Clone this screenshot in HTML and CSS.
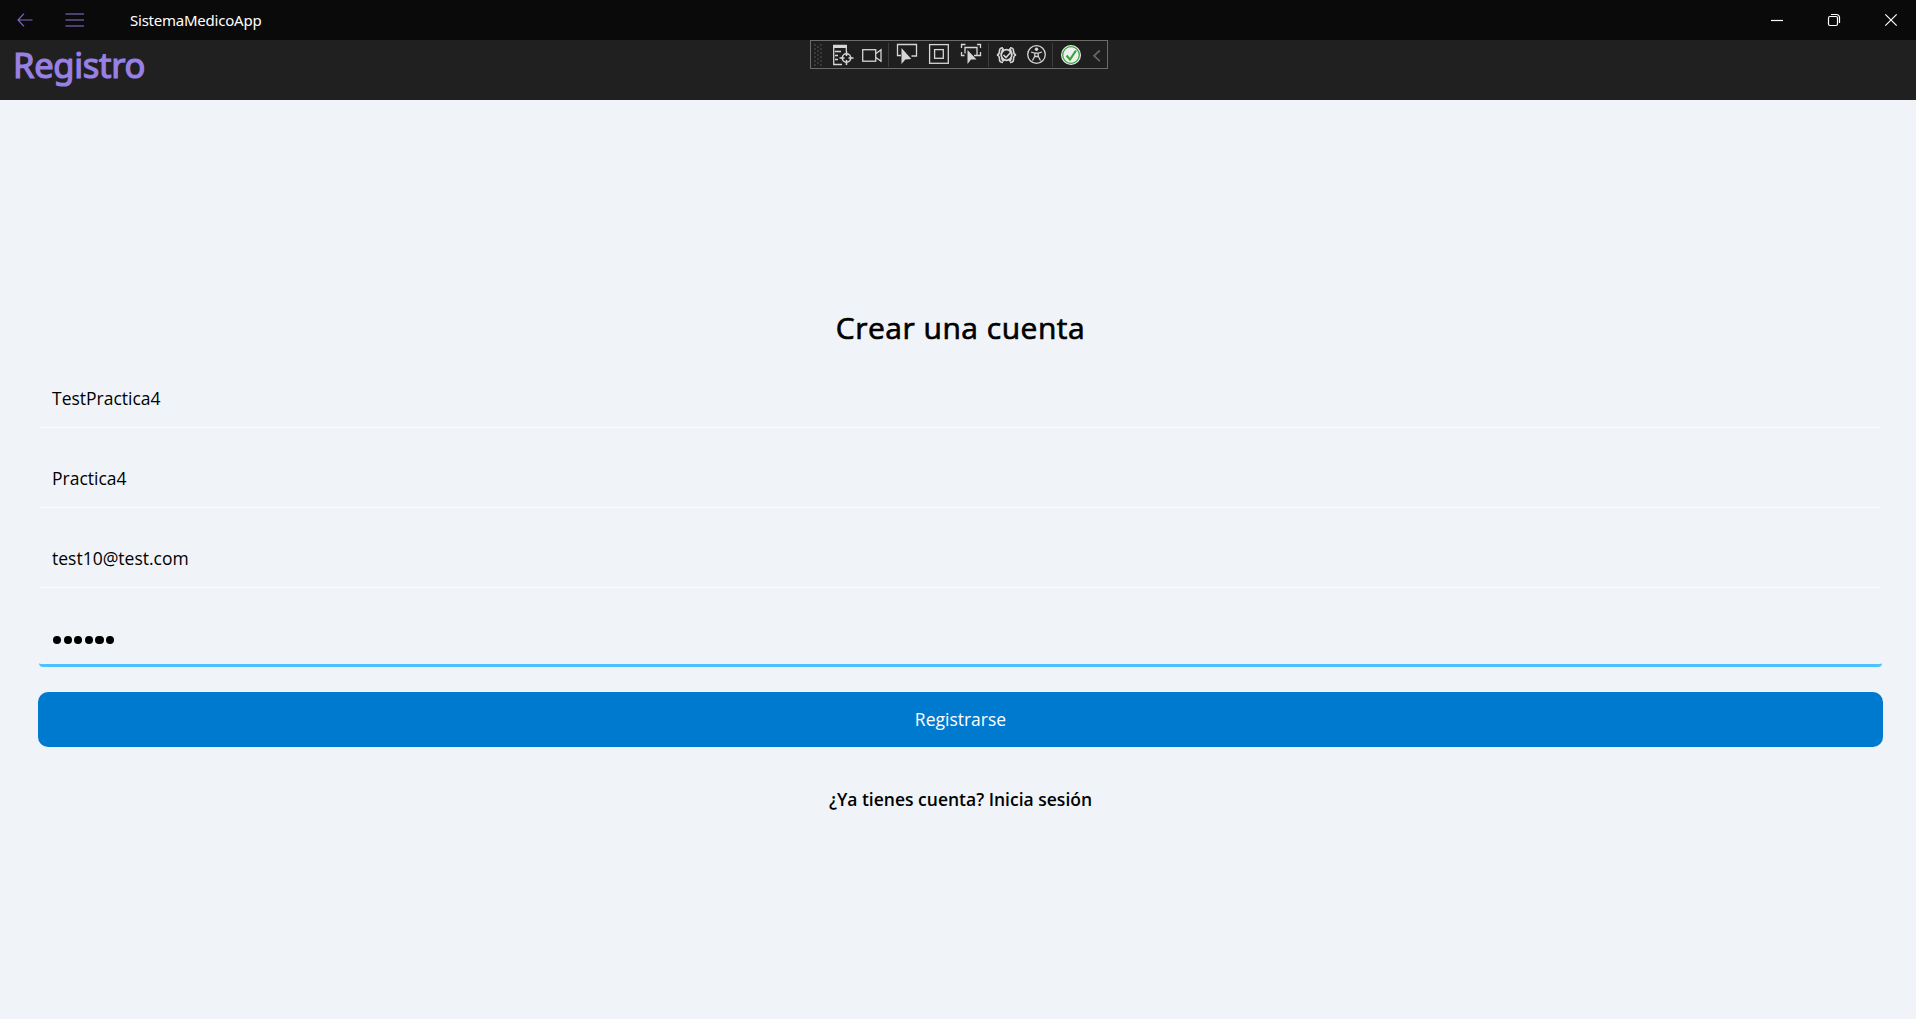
FILE: index.html
```html
<!DOCTYPE html>
<html lang="es">
<head>
<meta charset="utf-8">
<title>SistemaMedicoApp</title>
<link rel="stylesheet" href="styles.css">
</head>
<body>
<header class="titlebar">
  <button class="nav-btn back" aria-label="Atrás"><svg width="16" height="14" viewBox="0 0 16 14"><path d="M7 .7 1 7l6 6.3M1 7h14.5"/></svg></button>
  <button class="nav-btn menu" aria-label="Menú"><svg width="20" height="14" viewBox="0 0 20 14"><path d="M.5 1h18.5M.5 7h18.5M.5 13h18.5"/></svg></button>
  <span class="app-name">SistemaMedicoApp</span>
  <div class="window-controls">
    <button aria-label="Minimizar"><svg width="14" height="14" viewBox="0 0 14 14"><path d="M1 7.5h12"/></svg></button>
    <button aria-label="Restaurar"><svg width="14" height="14" viewBox="0 0 14 14"><rect x="1.5" y="3.5" width="9" height="9" rx="1.5"/><path d="M4 1.5h5.5a3 3 0 0 1 3 3V10"/></svg></button>
    <button aria-label="Cerrar"><svg width="14" height="14" viewBox="0 0 14 14"><path d="m1.3 1.3 11.4 11.4M12.700 1.300 1.300 12.700"/></svg></button>
  </div>
</header>
<div class="page-header">
  <h1 class="page-title">Registro</h1>
  <div class="debug-bar">
    <svg class="grip" width="16" height="27" viewBox="811 41 16 27"><path d="M815 44v22M821 44v22" stroke-dasharray="2 2"/><path d="M818 46v20" stroke-dasharray="2 2"/></svg>
    <svg width="30" height="27" viewBox="827 41 30 27"><path d="M842 64.500H833.700V45.500H846.300V51"/><path d="M833 46.500h14" stroke-width="3"/><path d="M835 51.500h6M835 55.500h3M835 59.500h3"/><circle cx="846.500" cy="58" r="4.200" stroke-width="1.500"/><path d="M846.500 51v5M846.500 60v5M839.500 58h5M848.500 58h5" stroke-width="1.500"/></svg>
    <svg width="31" height="27" viewBox="857 41 31 27"><rect x="862.700" y="49.700" width="13" height="11.500"/><path d="m876 53.500 5-3.700v11.400l-5-3.700"/></svg>
    <i class="sep"></i>
    <svg width="34" height="27" viewBox="889 41 34 27"><path d="M901 55.500h-3.500v-11h19v11.500h-5"/><path class="solid" d="M901.500 48v16l3.800-4.500 6-.5z"/></svg>
    <svg width="32" height="27" viewBox="923 41 32 27"><rect x="929.600" y="44.600" width="18.700" height="18.700"/><rect x="934.600" y="49.600" width="8.700" height="8.700"/></svg>
    <svg width="33" height="27" viewBox="955 41 33 27"><path d="M961.500 48v-3.500h4M977 44.500h3.500V48M961.500 52v3.500h3M980.500 52v3.500h-3M968 47.500h9v8h-3M968 47.500h-3v6"/><path class="solid" d="M967.500 50v14l3.500-4.500h5.500z"/></svg>
    <i class="sep"></i>
    <svg width="32" height="27" viewBox="989 41 32 27"><circle cx="1006.500" cy="55" r="5.300" stroke-width="1.800"/><path d="m1003.500 55 2.500 2.500 5-5.500" stroke-width="1.600"/><path d="M1003 47.700c-3 0-3.500 1-3.500 3 0 3-1 4-2.500 4.300 1.500.3 2.500 1.500 2.500 4.500 0 2 .500 3 3.500 3M1010 47.700c3 0 3.500 1 3.500 3 0 3 1 4 2.500 4.300-1.500.3-2.500 1.500-2.500 4.500 0 2-.500 3-3.500 3M1004 49c-1.800 0-2 1-2 3M1009 49c1.800 0 2 1 2 3M1004 61c-1.800 0-2-1-2-3M1009 61c1.800 0 2-1 2-3" stroke-width="1.600"/></svg>
    <svg width="31" height="27" viewBox="1021 41 31 27"><circle cx="1036.500" cy="54.500" r="8.800"/><circle class="solid" cx="1036.500" cy="49.200" r="1.700"/><path d="m1031 52 3.800 1.200v3l-2.300 4.300M1042 52l-3.800 1.200v3l2.300 4.300M1034.800 53.200h3.400M1034.800 56.500h3.400"/></svg>
    <i class="sep"></i>
    <svg width="34" height="27" viewBox="1053 41 34 27"><circle class="ok-rim" cx="1071" cy="55" r="10"/><circle class="ok-disc" cx="1071" cy="55" r="8.300"/><path class="ok-check" d="m1066.500 55.500 3.500 4 6-9"/></svg>
    <svg width="20" height="27" viewBox="1087 41 20 27"><path class="chevron" d="m1099.800 50.500-5.800 5.300 5.800 5.300"/></svg>
  </div>
</div>
<main class="content">
  <form class="form">
    <h2 class="heading">Crear una cuenta</h2>
    <div class="field"><span class="value">TestPractica4</span></div>
    <div class="field"><span class="value">Practica4</span></div>
    <div class="field"><span class="value">test10@test.com</span></div>
    <div class="field focused"><span class="dots"><i></i><i></i><i></i><i></i><i></i><i></i></span></div>
    <button class="submit" type="button">Registrarse</button>
    <a class="login-link">¿Ya tienes cuenta? Inicia sesión</a>
  </form>
</main>
</body>
</html>
```
FILE: styles.css
```css
* { box-sizing: border-box; }

body {
  margin: 0;
  height: 1019px;
  display: flex;
  flex-direction: column;
  overflow: hidden;
  background: #f0f4f8;
  color: #000;
  font-family: "Open Sans", "Noto Sans", sans-serif;
}

button {
  padding: 0;
  border: 0;
  background: none;
  font: inherit;
}

svg { display: block; fill: none; }

.titlebar {
  flex: none;
  height: 40px;
  display: flex;
  align-items: center;
  background: #0a0a0a;
  color: #fff;
}

.nav-btn {
  height: 40px;
  width: 50px;
  display: grid;
  place-items: center;
}

.nav-btn svg { stroke: #7f68c4; stroke-width: 1.2; }
.menu svg { stroke: #8d74d8; stroke-width: 1.2; }

.app-name {
  margin-left: 30px;
  font: 15px/20px "Noto Sans", sans-serif;
  letter-spacing: -0.23px;
}

.window-controls { margin-left: auto; margin-right: -3px; display: flex; }

.window-controls button {
  width: 57px;
  height: 38px;
  display: grid;
  place-items: center;
}

.window-controls svg { stroke: #fff; stroke-width: 1.2; }

.page-header {
  position: relative;
  flex: none;
  height: 60px;
  padding-left: 13px;
  background: #202020;
}

.page-title {
  margin: 0;
  color: #9880e5;
  font: 400 34.5px/50px "Noto Sans", sans-serif;
  letter-spacing: -0.3px;
  -webkit-text-stroke: 1.2px #9880e5;
}

.debug-bar {
  position: absolute;
  left: 810px;
  top: 0;
  height: 29px;
  display: flex;
  border: 1px solid #6b6b6b;
  background: #1f1f1f;
}

.debug-bar svg { stroke: #d6d6d6; stroke-width: 1.3; }
.debug-bar .grip { stroke: #484848; stroke-width: 1.3; }
.debug-bar .solid { fill: #d6d6d6; stroke: none; }
.debug-bar .ok-rim { fill: #f0f0f0; stroke: none; }
.debug-bar .ok-disc { stroke: #37a33c; stroke-width: 1.3; }
.debug-bar .ok-check { stroke: #37a33c; stroke-width: 2.2; }
.debug-bar .chevron { stroke: #666; stroke-width: 1.7; }
.sep { width: 1px; margin: 2px 0 1px; background: #3d3d3d; }

.content { flex: 1; padding: 203px 33px 0 38px; }

.form { display: flex; flex-direction: column; }

.heading {
  margin: 0 0 20px;
  font-size: 30px;
  line-height: 50px;
  font-weight: 400;
  letter-spacing: 0.5px;
  text-align: center;
  -webkit-text-stroke: 0.7px #000;
}

.field {
  height: 55px;
  margin: 0 3px 25px 2px;
  padding: 0 0 4px 12px;
  display: flex;
  align-items: center;
  border-bottom: 1px solid #fafcfd;
}

.value { font-size: 17.5px; line-height: 24px; }

.focused {
  margin: -1px 1px 25px;
  padding: 4px 0 0 14px;
  border-bottom: 3px solid #4cc2ff;
  border-radius: 0 0 4px 4px;
}

.dots { display: flex; gap: 2.4px; }

.dots i {
  width: 8.2px;
  height: 8.4px;
  border-radius: 50%;
  background: #000;
}

.submit {
  height: 55px;
  padding-bottom: 2px;
  border-radius: 10px;
  background: #007ace;
  color: #fff;
  font-size: 17.5px;
}

.login-link {
  margin-top: 40px;
  font-size: 17.5px;
  line-height: 24px;
  font-weight: 600;
  text-align: center;
}
```
